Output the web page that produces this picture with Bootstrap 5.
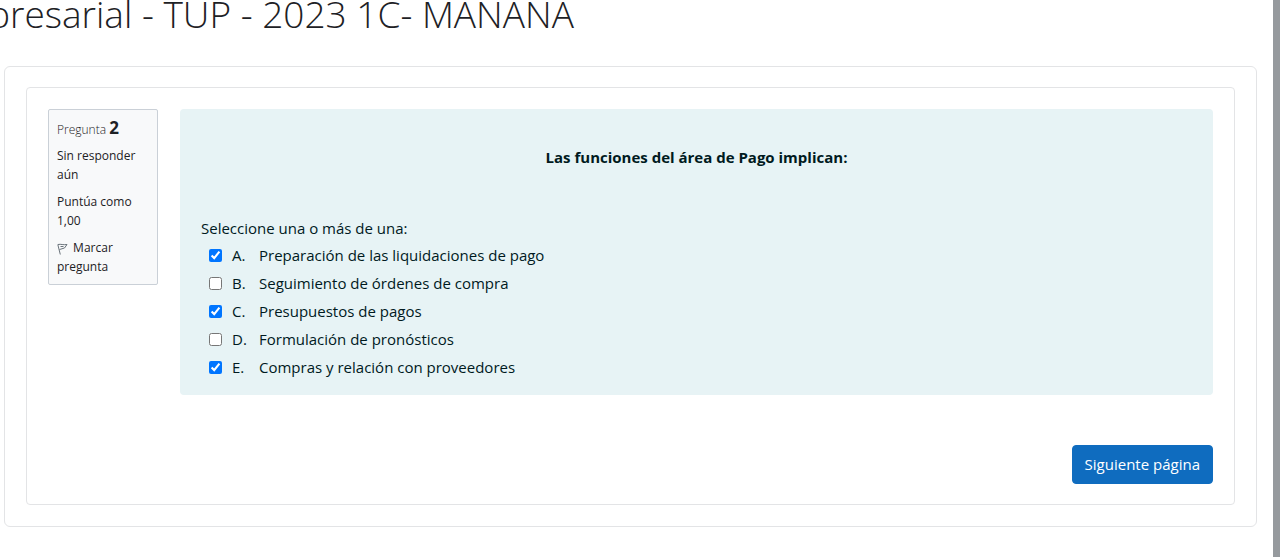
<!DOCTYPE html>
<html lang="es">
<head>
<meta charset="utf-8">
<meta name="viewport" content="width=device-width, initial-scale=1">
<title>Cuestionario</title>
<link rel="stylesheet" href="https://cdn.jsdelivr.net/npm/bootstrap@5.3.0/dist/css/bootstrap.min.css">
<style>
body { font-family: "Open Sans", "Noto Sans", sans-serif; font-size: 15px; line-height: 24px; color: #1d2125; background: #fff; }
.page-wrap { min-height: 100vh; border-right: 7px solid #969a9e; padding-left: 4px; padding-right: 16px; }
.course-title { font-family: "Open Sans", sans-serif; font-weight: 300; font-size: 37px; line-height: 44px; margin: -8px 0 0 -16px; padding-bottom: 30px; white-space: nowrap; }
.region { border: 1px solid #e3e4e6; border-radius: 6px; padding: 21px; }
.region .region { border-radius: 4px; padding-bottom: 20px; }
.region form.region { margin-top: -1px; }
.question { gap: 22px; }
.info { flex: 0 0 110px; border: 1px solid #cad0d7; border-radius: 2px; background: #f8f9fa; padding: 8px; font-size: 12px; line-height: 19px; }
.info h2 { font-size: 12px; font-weight: 300; line-height: 20px; margin-bottom: 6px; }
.info h2 span { font-size: 17px; font-weight: 700; }
.info-line { margin-bottom: 8px; }
.flag { margin-right: 2px; }
.formulation { background: #e7f3f5; color: #001a1e; border-radius: 4px; padding: 36px 21px 16px; }
.question-text { font-weight: 700; margin-bottom: 47px; }
.answers { margin: 3px 8px 0; display: grid; row-gap: 4px; }
.answers input { width: 13px; height: 13px; margin: 0 10px 0 0; accent-color: #0075ff; }
.answers .letter { width: 27px; }
.actions { margin-top: 50px; }
.btn-next { --bs-btn-bg: #0f6cbf; --bs-btn-color: #fff; --bs-btn-border-color: #0f6cbf; --bs-btn-hover-bg: #0c589c; --bs-btn-hover-color: #fff; font-size: 15px; line-height: 25px; border-radius: 4px; padding: 6px 12px; }
</style>
</head>
<body>
<div class="page-wrap overflow-hidden">
  <h1 class="course-title">presarial - TUP - 2023 1C- MAÑANA</h1>
  <main class="region">
    <form class="region">
      <div class="question d-flex align-items-start">
        <div class="info">
          <h2>Pregunta <span>2</span></h2>
          <div class="info-line">Sin responder aún</div>
          <div class="info-line">Puntúa como 1,00</div>
          <a href="#" class="d-block text-reset text-decoration-none"><svg class="flag" width="11" height="12" viewBox="0 0 11 12" fill="none" stroke="#6a737b" aria-hidden="true"><path d="M.8 1.500 3.300 11.500M1 1.500C4 .8 6 2.200 10 1.500L7.500 5 2.500 6.500M3.500 3.500h3" /></svg> Marcar pregunta</a>
        </div>
        <div class="formulation flex-grow-1">
          <div class="question-text text-center">Las funciones del área de Pago implican:</div>
          <div>Seleccione una o más de una:</div>
          <div class="answers">
            <div class="d-flex align-items-center"><input type="checkbox" id="a" checked><label for="a" class="d-flex"><span class="letter">A.</span>Preparación de las liquidaciones de pago</label></div>
            <div class="d-flex align-items-center"><input type="checkbox" id="b"><label for="b" class="d-flex"><span class="letter">B.</span>Seguimiento de órdenes de compra</label></div>
            <div class="d-flex align-items-center"><input type="checkbox" id="c" checked><label for="c" class="d-flex"><span class="letter">C.</span>Presupuestos de pagos</label></div>
            <div class="d-flex align-items-center"><input type="checkbox" id="d"><label for="d" class="d-flex"><span class="letter">D.</span>Formulación de pronósticos</label></div>
            <div class="d-flex align-items-center"><input type="checkbox" id="e" checked><label for="e" class="d-flex"><span class="letter">E.</span>Compras y relación con proveedores</label></div>
          </div>
        </div>
      </div>
      <div class="actions d-flex justify-content-end">
        <button type="button" class="btn btn-next">Siguiente página</button>
      </div>
    </form>
  </main>
</div>
<script src="https://cdn.jsdelivr.net/npm/bootstrap@5.3.0/dist/js/bootstrap.bundle.min.js"></script>
</body>
</html>
